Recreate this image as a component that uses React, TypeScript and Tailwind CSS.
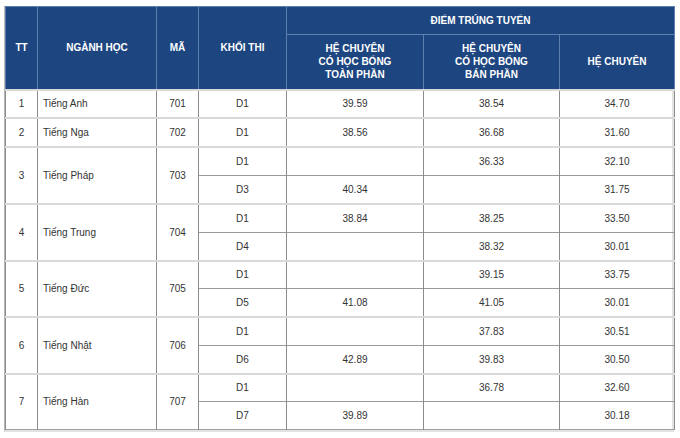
import React from "react";

type Sub = { k: string; a: string; b: string; c: string };
type Row = { tt: string; name: string; ma: string; subs: Sub[] };

const rows: Row[] = [
  { tt: "1", name: "Tiếng Anh", ma: "701", subs: [{ k: "D1", a: "39.59", b: "38.54", c: "34.70" }] },
  { tt: "2", name: "Tiếng Nga", ma: "702", subs: [{ k: "D1", a: "38.56", b: "36.68", c: "31.60" }] },
  {
    tt: "3", name: "Tiếng Pháp", ma: "703",
    subs: [
      { k: "D1", a: "", b: "36.33", c: "32.10" },
      { k: "D3", a: "40.34", b: "", c: "31.75" },
    ],
  },
  {
    tt: "4", name: "Tiếng Trung", ma: "704",
    subs: [
      { k: "D1", a: "38.84", b: "38.25", c: "33.50" },
      { k: "D4", a: "", b: "38.32", c: "30.01" },
    ],
  },
  {
    tt: "5", name: "Tiếng Đức", ma: "705",
    subs: [
      { k: "D1", a: "", b: "39.15", c: "33.75" },
      { k: "D5", a: "41.08", b: "41.05", c: "30.01" },
    ],
  },
  {
    tt: "6", name: "Tiếng Nhật", ma: "706",
    subs: [
      { k: "D1", a: "", b: "37.83", c: "30.51" },
      { k: "D6", a: "42.89", b: "39.83", c: "30.50" },
    ],
  },
  {
    tt: "7", name: "Tiếng Hàn", ma: "707",
    subs: [
      { k: "D1", a: "", b: "36.78", c: "32.60" },
      { k: "D7", a: "39.89", b: "", c: "30.18" },
    ],
  },
];

const th =
  "bg-[#1d4580] text-white font-bold text-[10px] leading-[13px] text-center align-middle border border-[#5d7fae] p-0";
const tdGroup =
  "border-x border-x-[#8c8c8c] border-t-2 border-t-[#d9d9d9] text-[10px] text-[#333] align-middle p-0";
const tdSub =
  "border-x border-x-[#8c8c8c] border-t border-t-[#9a9a9a] text-[10px] text-[#333] align-middle p-0";

export default function App() {
  return (
    <div className="w-[680px] h-[438px] bg-white pt-[6px] pl-[4px]" style={{ fontFamily: '"Liberation Sans", Arial, sans-serif' }}>
      <div className="w-[670px] border-l border-[#b5b5b5] border-r-2 border-r-[#e2e2e2] border-b-2 border-b-[#e2e2e2]">
        <table className="border-collapse table-fixed w-[669px] border-b border-b-[#a0a0a0]">
          <colgroup>
            <col className="w-[32px]" />
            <col className="w-[119px]" />
            <col className="w-[42px]" />
            <col className="w-[88px]" />
            <col className="w-[137px]" />
            <col className="w-[136px]" />
            <col className="w-[115px]" />
          </colgroup>
          <thead>
            <tr className="h-[28px]">
              <th rowSpan={2} className={th}>TT</th>
              <th rowSpan={2} className={th}>NGÀNH HỌC</th>
              <th rowSpan={2} className={th}>MÃ</th>
              <th rowSpan={2} className={th}>KHỐI THI</th>
              <th colSpan={3} className={th}>ĐIỂM TRÚNG TUYỂN</th>
            </tr>
            <tr className="h-[55px]">
              <th className={th}>
                HỆ CHUYÊN
                <br />
                CÓ HỌC BỔNG
                <br />
                TOÀN PHẦN
              </th>
              <th className={th}>
                HỆ CHUYÊN
                <br />
                CÓ HỌC BỔNG
                <br />
                BÁN PHẦN
              </th>
              <th className={th}>HỆ CHUYÊN</th>
            </tr>
          </thead>
          <tbody>
            {rows.map((r, ri) =>
              r.subs.map((s, i) => {
                const cls = i === 0 ? tdGroup : tdSub;
                let h = "h-[28px]";
                if (r.subs.length === 2) h = i === 0 && ri !== 6 && ri !== 4 ? "h-[29px]" : "h-[28px]";
                else h = ri === 0 ? "h-[28px]" : "h-[29px]";
                return (
                  <tr key={r.tt + s.k} className={h}>
                    {i === 0 && (
                      <>
                        <td rowSpan={r.subs.length} className={tdGroup + " text-center"}>{r.tt}</td>
                        <td rowSpan={r.subs.length} className={tdGroup + " text-left pl-[5px]"}>{r.name}</td>
                        <td rowSpan={r.subs.length} className={tdGroup + " text-center"}>{r.ma}</td>
                      </>
                    )}
                    <td className={cls + " text-center"}>{s.k}</td>
                    <td className={cls + " text-center"}>{s.a}</td>
                    <td className={cls + " text-center"}>{s.b}</td>
                    <td className={cls + " text-center"}>{s.c}</td>
                  </tr>
                );
              })
            )}
          </tbody>
        </table>
      </div>
    </div>
  );
}
